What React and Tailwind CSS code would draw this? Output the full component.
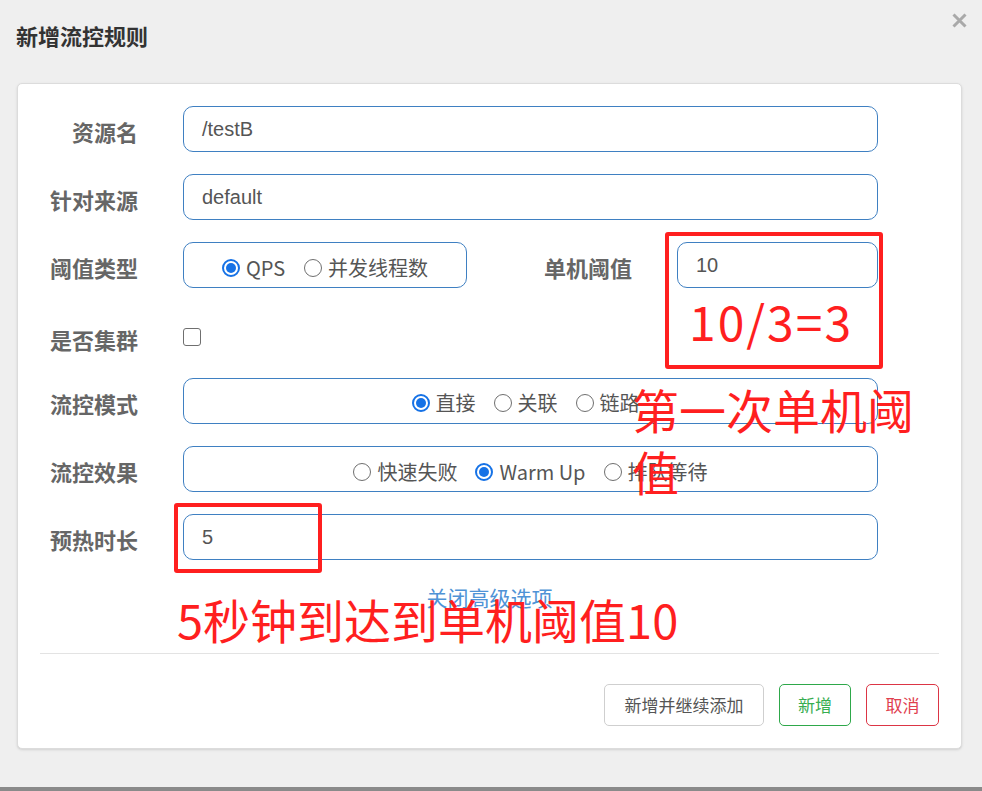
import React from "react";

const cjk = { fontFamily: '"Noto Sans CJK SC", "Noto Sans", sans-serif' };
const latin = { fontFamily: '"Liberation Sans", "Noto Sans CJK SC", sans-serif' };

function Radio({ checked, label }) {
  return (
    <label className="flex items-center gap-[6px]">
      {checked ? (
        <span className="w-[18px] h-[18px] rounded-full border-2 border-[#1672e6] bg-white flex items-center justify-center">
          <span className="w-[10px] h-[10px] rounded-full bg-[#1672e6]" />
        </span>
      ) : (
        <span className="w-[18px] h-[18px] rounded-full border border-[#6f6f6f] bg-white" />
      )}
      <span className="text-[20px] text-[#555] leading-none">{label}</span>
    </label>
  );
}

function Label({ children, w = "w-[120px]" }) {
  return (
    <div className={`${w} shrink-0 pt-[4px] text-right text-[22px] font-bold text-[#666] leading-none`}>
      {children}
    </div>
  );
}

function Input({ value, w = "w-[695px]" }) {
  return (
    <div
      className={`${w} h-[46px] border border-[#3f80c2] rounded-[10px] bg-white flex items-center pl-[18px] text-[20px] text-[#555]`}
      style={latin}
    >
      {value}
    </div>
  );
}

export default function App() {
  return (
    <div className="relative w-[982px] h-[791px] bg-[#efefef] overflow-hidden" style={cjk}>
      {/* header */}
      <div className="h-[83px] flex justify-between items-start pl-4 pr-[15px]">
        <h1 className="pt-[24px] text-[22px] font-bold text-[#333] leading-none">新增流控规则</h1>
        <svg className="mt-[13px] w-[15px] h-[15px]" viewBox="0 0 15 15">
          <path d="M1.5 1.5l12 12M13.5 1.5l-12 12" stroke="#a9a9a9" strokeWidth="3" />
        </svg>
      </div>

      {/* card */}
      <div className="ml-[17px] w-[945px] h-[666px] bg-white border border-[#dcdcdc] rounded-[5px] shadow-sm flex flex-col">
        <div className="flex flex-col gap-[22px] pt-[22px]">
          <div className="flex items-center h-[46px]">
            <Label>资源名</Label>
            <div className="ml-[45px]">
              <Input value="/testB" />
            </div>
          </div>

          <div className="flex items-center h-[46px]">
            <Label>针对来源</Label>
            <div className="ml-[45px]">
              <Input value="default" />
            </div>
          </div>

          <div className="flex items-center h-[46px]">
            <Label>阈值类型</Label>
            <div className="ml-[45px] w-[284px] h-[46px] pt-[6px] border border-[#3f80c2] rounded-[10px] flex items-center justify-center gap-[19px]">
              <Radio checked label="QPS" />
              <Radio label="并发线程数" />
            </div>
            <Label w="w-[165px]">单机阈值</Label>
            <div className="ml-[45px]">
              <Input value="10" w="w-[201px]" />
            </div>
          </div>

          <div className="flex items-center h-[46px] pt-[8px]">
            <Label>是否集群</Label>
            <span className="ml-[45px] w-[18px] h-[18px] rounded-[3px] border border-[#6f6f6f] bg-white" />
          </div>

          <div className="flex items-center h-[46px]">
            <Label>流控模式</Label>
            <div className="ml-[45px] w-[695px] h-[46px] pt-[4px] border border-[#3f80c2] rounded-[10px] flex items-center justify-center gap-[18px] pr-[10px]">
              <Radio checked label="直接" />
              <Radio label="关联" />
              <Radio label="链路" />
            </div>
          </div>

          <div className="flex items-center h-[46px]">
            <Label>流控效果</Label>
            <div className="ml-[45px] w-[695px] h-[46px] pt-[6px] border border-[#3f80c2] rounded-[10px] flex items-center justify-center gap-[18px]">
              <Radio label="快速失败" />
              <Radio checked label="Warm Up" />
              <Radio label="排队等待" />
            </div>
          </div>

          <div className="flex items-center h-[46px]">
            <Label>预热时长</Label>
            <div className="ml-[45px]">
              <Input value="5" />
            </div>
          </div>
        </div>

        <div className="mt-[27px] text-center text-[21px] leading-none text-[#4f93d6]">关闭高级选项</div>

        <div className="mt-[45px] mx-[22px] h-px bg-[#e3e3e3]" />

        <div className="mt-[30px] pr-[22px] flex justify-end gap-[15px]">
          <button className="w-[160px] h-[42px] border border-[#cfcfcf] rounded-[5px] text-[17px] text-[#555]">
            新增并继续添加
          </button>
          <button className="w-[72px] h-[42px] border border-[#2ea84a] rounded-[5px] text-[17px] text-[#36ad50]">
            新增
          </button>
          <button className="w-[73px] h-[42px] border border-[#dc3545] rounded-[5px] text-[17px] text-[#e0404e]">
            取消
          </button>
        </div>
      </div>

      <div className="absolute left-0 bottom-0 w-full h-[4px] bg-[#8a8a8a]" />

      {/* red annotations */}
      <div className="absolute left-[665px] top-[232px] w-[218px] h-[137px] border-[4px] border-[#ff1f1f] rounded-[3px]" />
      <div className="absolute left-[689px] top-[296px] text-[48px] tracking-[2px] leading-none text-[#ff1f1f]">10/3=3</div>
      <div className="absolute left-[632px] top-[378px] text-[47px] leading-[62px] text-[#ff1f1f]">
        第一次单机阈
        <br />
        值
      </div>
      <div className="absolute left-[174px] top-[503px] w-[148px] h-[70px] border-[4px] border-[#ff1f1f] rounded-[3px]" />
      <div className="absolute left-[177px] top-[595px] text-[47px] leading-none text-[#ff1f1f] whitespace-nowrap">
        5秒钟到达到单机阈值10
      </div>
    </div>
  );
}
